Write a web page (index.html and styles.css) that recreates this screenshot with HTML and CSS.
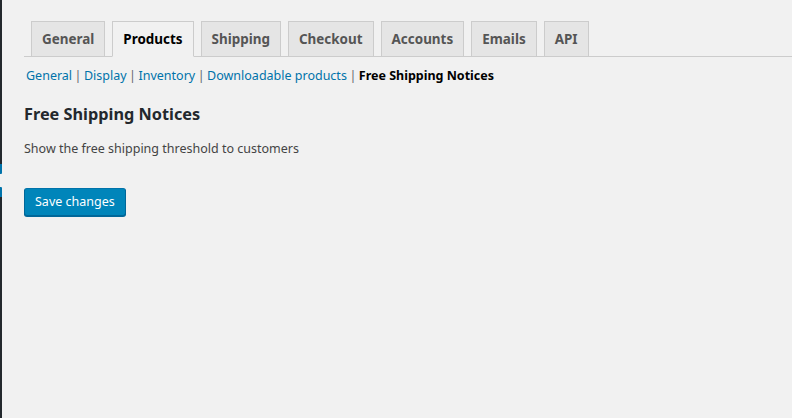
FILE: index.html
```html
<!DOCTYPE html>
<html lang="en">
<head>
<meta charset="utf-8">
<title>Products settings</title>
<link rel="stylesheet" href="styles.css">
</head>
<body>
<div class="layout">
  <div class="adminmenu">
    <div class="menu-dark"></div>
    <div class="menu-current"></div>
    <div class="menu-gap"></div>
    <div class="menu-current second"></div>
    <div class="menu-dark fill"></div>
  </div>
  <main class="wrap">
    <nav class="nav-tab-wrapper">
      <a class="nav-tab">General</a>
      <a class="nav-tab active">Products</a>
      <a class="nav-tab">Shipping</a>
      <a class="nav-tab">Checkout</a>
      <a class="nav-tab">Accounts</a>
      <a class="nav-tab">Emails</a>
      <a class="nav-tab">API</a>
    </nav>
    <ul class="subsubsub">
      <li><a class="sub-link">General</a><span class="sep">|</span></li>
      <li><a class="sub-link">Display</a><span class="sep">|</span></li>
      <li><a class="sub-link">Inventory</a><span class="sep">|</span></li>
      <li><a class="sub-link">Downloadable products</a><span class="sep">|</span></li>
      <li><a class="sub-link current">Free Shipping Notices</a></li>
    </ul>
    <h2 class="section-title">Free Shipping Notices</h2>
    <p class="section-desc">Show the free shipping threshold to customers</p>
    <div class="submit-row">
      <button class="button-primary" type="button">Save changes</button>
    </div>
  </main>
</div>
</body>
</html>
```
FILE: styles.css
```css
html, body {
  margin: 0;
  padding: 0;
  height: 100%;
  background: #f1f1f1;
}
body {
  font-family: "Noto Sans", "Open Sans", sans-serif;
  font-size: 12.5px;
  color: #444;
}
.layout {
  display: flex;
  min-height: 418px;
}
.adminmenu {
  width: 2px;
  flex: none;
  display: flex;
  flex-direction: column;
}
.menu-dark {
  height: 164px;
  background: #23282d;
}
.menu-dark.fill {
  flex: 1;
  height: auto;
}
.menu-current {
  height: 10px;
  background: #0073aa;
  border-bottom-right-radius: 1px;
}
.menu-current.second {
  height: 10px;
  border-radius: 0;
  border-top-right-radius: 1px;
}
.menu-gap {
  height: 13px;
  background: #f1f1f1;
}
.wrap {
  flex: 1;
  padding-left: 22px;
}
.nav-tab-wrapper {
  display: flex;
  padding-top: 21px;
  padding-left: 7px;
  border-bottom: 1px solid #ccc;
}
.nav-tab {
  display: block;
  margin-right: 7px;
  margin-bottom: -1px;
  padding: 5px 10px;
  border: 1px solid #ccc;
  background: #e5e5e5;
  color: #555;
  font-size: 13.45px;
  line-height: 24px;
  font-weight: 700;
  white-space: nowrap;
}
.nav-tab.active {
  background: #f1f1f1;
  color: #000;
  border-bottom-color: #f1f1f1;
}
.subsubsub {
  list-style: none;
  margin: 9px 0 0 2px;
  padding: 0;
  display: flex;
  font-size: 12.5px;
  line-height: 20px;
  color: #646970;
}
.subsubsub li {
  white-space: nowrap;
}
.sub-link {
  color: #0073aa;
}
.sub-link.current {
  color: #000;
  font-weight: 700;
}
.sep {
  margin: 0 2.5px;
}
.section-title {
  margin: 17px 0 0;
  font-size: 16.3px;
  line-height: 22px;
  font-weight: 700;
  color: #23282d;
}
.section-desc {
  margin: 14px 0 0;
  font-size: 12.5px;
  line-height: 20px;
  color: #444;
}
.submit-row {
  margin-top: 29px;
}
.button-primary {
  height: 28px;
  padding: 0 10px;
  border: 1px solid #006799;
  border-color: #0073aa #006799 #006799;
  border-radius: 3px;
  background: #0085ba;
  box-shadow: 0 1px 0 #006799;
  color: #fff;
  font-family: inherit;
  font-size: 12.5px;
  line-height: 26px;
}
```
